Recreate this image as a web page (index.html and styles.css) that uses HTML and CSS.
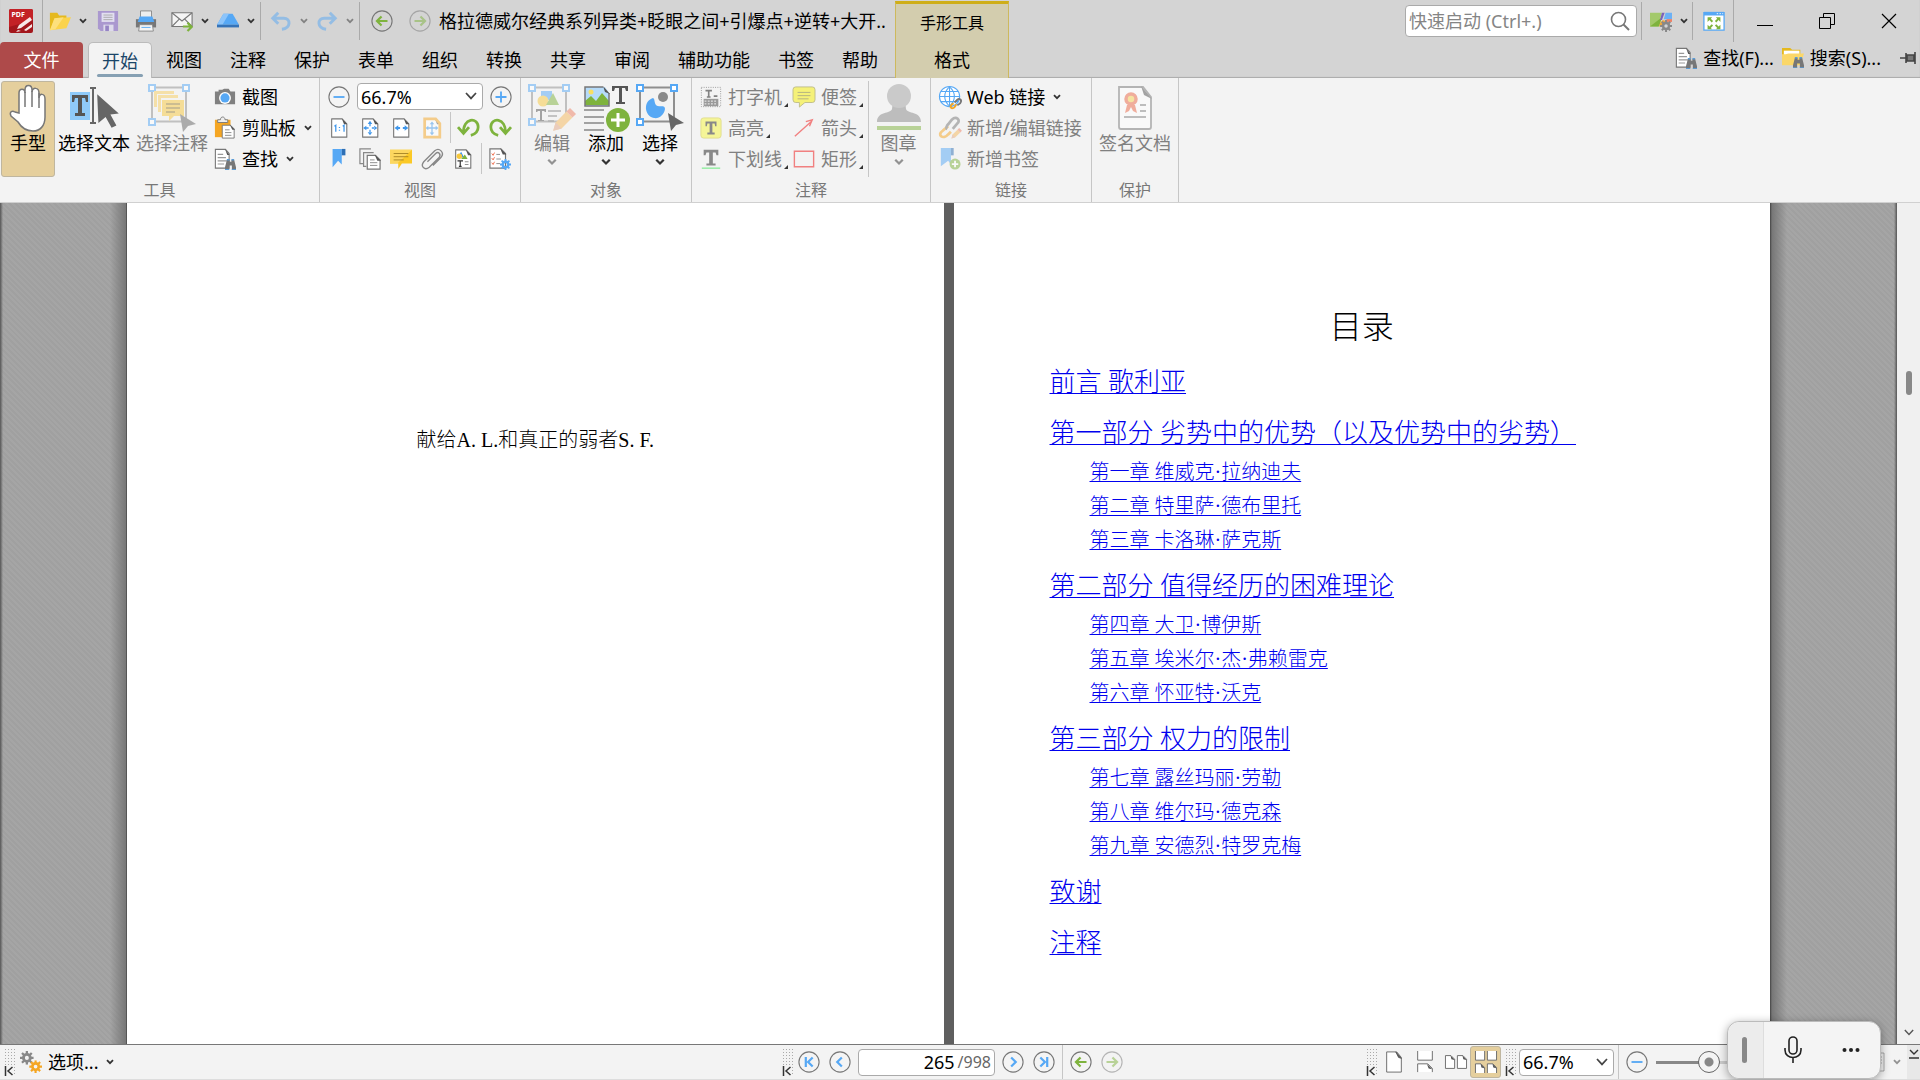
FILE: index.html
```html
<!DOCTYPE html>
<html lang="zh-CN">

<head>
    <meta charset="UTF-8">
    <meta name="viewport" content="width=device-width, initial-scale=1.0">
    <title>格拉德威尔经典系列</title>
    <link rel="stylesheet" href="styles.css">
</head>

<body>
    <!-- shared icons -->
    <svg class="sprite" aria-hidden="true">
        <symbol id="chev" viewBox="0 0 8 6"><path d="M1 1.2l3 3 3-3" fill="none" stroke="currentColor" stroke-width="1.8"/></symbol>
        <symbol id="chev-wide" viewBox="0 0 12 8"><path d="M1 1l5 5.4L11 1" fill="none" stroke="currentColor" stroke-width="1.7"/></symbol>
        <symbol id="sheet" viewBox="0 0 24 24">
            <path d="M4 2h11.500l5 5.500V22H4z" fill="#fff" stroke="#777" stroke-width="1.2" stroke-linejoin="round"/>
            <path d="M15 1.500l6 6.500h-3.500z" fill="#555"/>
        </symbol>
        <symbol id="binoc" viewBox="0 0 12 12">
            <path d="M2 1h3v2h2V1h3l2 8v3H7.500V7h-3v5H0V9z" fill="#777"/>
            <path d="M2 0h3v1.500H2zM7 0h3v1.500H7zM0 11h4.500v1H0zM7.500 11H12v1H7.500z" fill="#5b9bd5"/>
        </symbol>
        <symbol id="find" viewBox="0 0 24 24">
            <path d="M1.500 1.500h11l4 4.500v16h-15z" fill="#fff" stroke="#777" stroke-width="1.2"/>
            <path d="M12 1l5 6.500h-2.500z" fill="#555"/>
            <path d="M4 7h6M4 10.500h9M4 14h10M4 17.500h7" stroke="#999" stroke-width="1.2"/>
            <use href="#binoc" x="12" y="12" width="12" height="12"/>
        </symbol>
        <symbol id="circle" viewBox="0 0 24 24"><circle cx="12" cy="12" r="11" fill="#f4f4f4" stroke="#777" stroke-width="1.2"/></symbol>
        <symbol id="minus" viewBox="0 0 24 24"><use href="#circle"/><path d="M6 12h12" stroke="#56a8f5" stroke-width="2"/></symbol>
        <symbol id="plus" viewBox="0 0 24 24"><use href="#circle"/><path d="M6 12h12M12 6v12" stroke="#56a8f5" stroke-width="2"/></symbol>
        <symbol id="back" viewBox="0 0 24 24"><circle cx="12" cy="12" r="11" fill="none" stroke="#777" stroke-width="1.2"/><path d="M18 12H7M11.500 7L6.500 12l5 5" fill="none" stroke="#7eb33d" stroke-width="2.4"/></symbol>
        <symbol id="fwd" viewBox="0 0 24 24"><circle cx="12" cy="12" r="11" fill="none" stroke="#777" stroke-width="1.2"/><path d="M6 12h11M12.500 7l5 5-5 5" fill="none" stroke="#7eb33d" stroke-width="2.4"/></symbol>
        <symbol id="gear" viewBox="0 0 24 24">
            <circle cx="12" cy="12" r="6" fill="none" stroke="currentColor" stroke-width="5"/>
            <path d="M12 0v5M12 19v5M0 12h5M19 12h5M3.500 3.500l3.500 3.500M17 17l3.500 3.500M20.500 3.500L17 7M7 17l-3.500 3.500" stroke="currentColor" stroke-width="4"/>
        </symbol>
        <symbol id="pencil" viewBox="0 0 20 20"><path d="M1 19l2-7L12 3l5 5-9 9z" fill="#f5b95c"/><path d="M12 3l3-3 5 5-3 3z" fill="#ee8064"/><path d="M1 19l2-7 5 5z" fill="#e2a687"/></symbol>
        <symbol id="handles" viewBox="0 0 48 48">
            <path d="M4 4.500h34v34H4z" fill="none" stroke="#8f8f8f" stroke-width="2"/>
            <path d="M1 2h6v6H1zM35 2h6v6h-6zM1 36h6v6H1z" fill="#fff" stroke="#56a8f5" stroke-width="2"/>
        </symbol>
        <symbol id="cursor" viewBox="0 0 20 28"><path d="M1 0l18 16-7 1 5 9-4 2-5-9-6 5z" fill="#666"/></symbol>
        <symbol id="pointer" viewBox="0 0 16 18"><path d="M0 0l16 10-8 2-5 6z" fill="#666"/></symbol>
        <symbol id="ribbonmark" viewBox="0 0 24 24"><path d="M5 1h10v17l-4-4-6 7z" fill="#56a8f5"/><path d="M15 1h4v7h-4z" fill="#2d6fb5"/></symbol>
        <symbol id="first" viewBox="0 0 24 24"><use href="#circle"/><path d="M8.500 6.500v11M16 7l-5 5 5 5" fill="none" stroke="#56a8f5" stroke-width="2.4"/></symbol>
        <symbol id="prev" viewBox="0 0 24 24"><use href="#circle"/><path d="M14 7l-5 5 5 5" fill="none" stroke="#56a8f5" stroke-width="2.4"/></symbol>
        <symbol id="grip-end" viewBox="0 0 9 10"><path d="M1.500 0v10M8.500 1L4 5l4.500 4" fill="none" stroke="#333" stroke-width="1.5"/></symbol>
    </svg>

    <header class="header">
        <div class="header-left">
            <div class="quickbar">
                <button class="logo" aria-label="PDF"><svg viewBox="0 0 24 24">
                    <rect width="24" height="24" rx="2" fill="#a3161c"/>
                    <path d="M0 2a2 2 0 012-2h20a2 2 0 012 2v9L0 18z" fill="#c32126"/>
                    <text x="2.500" y="8" class="logo-text">PDF</text>
                    <path d="M8 20l2-4L21 8l2 3-11 8zM15 21l8-6v3l-6 4zM9 21l3 1-5 1z" fill="#fff" opacity=".9"/>
                </svg></button>
                <span class="sep tall"></span>
                <button class="qbtn split" aria-label="打开"><svg viewBox="0 0 24 24"><path d="M1 3h8l2 3h8v5L5 21H1z" fill="#e5b91f"/><path d="M6 9l18-1-5 12-18 2z" fill="#fbd34c"/><path d="M6 9l10-1-9 13-6 1z" fill="#fde07d"/></svg></button>
                <button class="drop" aria-label="打开选项"><svg><use href="#chev"/></svg></button>
                <button class="qbtn" aria-label="保存"><svg viewBox="0 0 24 24"><path d="M1 1h22v22H4l-3-3z" fill="#aa98cf"/><path d="M5 3h14v10H5z" fill="#e2dff0"/><path d="M7 5.500h10M7 8h10M7 10.500h10" stroke="#aaa"/><path d="M7 16h11v7H7z" fill="#dedbeb"/><path d="M9 17h4v6H9z" fill="#9684c4"/></svg></button>
                <button class="qbtn" aria-label="打印"><svg viewBox="0 0 24 24"><path d="M6 1h12v9H6z" fill="#eee" stroke="#888"/><path d="M1 10h22v9H1z" fill="#777"/><path d="M3 13l2-6h14l2 6z" fill="#56a8f5"/><path d="M5 16h14l1 7H4z" fill="#f4f4f4" stroke="#888"/><path d="M7 19h10" stroke="#56a8f5"/></svg></button>
                <button class="qbtn split" aria-label="电邮"><svg viewBox="0 0 24 24"><path d="M1 3h22v15H1z" fill="#f5f5f5" stroke="#777" stroke-width="1.200"/><path d="M1 3l11 9 11-9M1 18l8-8M23 18l-8-8" fill="none" stroke="#777" stroke-width="1.200"/><path d="M13 18h8M18 14l4.500 4.500L18 23" fill="none" stroke="#7eb33d" stroke-width="2.400"/></svg></button>
                <button class="drop" aria-label="电邮选项"><svg><use href="#chev"/></svg></button>
                <button class="qbtn split" aria-label="扫描"><svg viewBox="0 0 24 24"><path d="M7 4h10l7 12H0z" fill="#56a8f5"/><path d="M7 4h6L6 16H0z" fill="#8cc4fa"/><path d="M0 16h24v3H0z" fill="#3573b8"/></svg></button>
                <button class="drop" aria-label="扫描选项"><svg><use href="#chev"/></svg></button>
                <span class="sep"></span>
                <button class="qbtn split off" aria-label="撤销"><svg viewBox="0 0 24 24"><path d="M9 3L3 9l6 6M4 9h11c8 0 8 11-2 12" fill="none" stroke="#56a8f5" stroke-width="3.200"/></svg></button>
                <button class="drop off" aria-label="撤销选项"><svg><use href="#chev"/></svg></button>
                <button class="qbtn split off" aria-label="重做"><svg viewBox="0 0 24 24"><path d="M15 3l6 6-6 6M20 9H9c-8 0-8 11 2 12" fill="none" stroke="#56a8f5" stroke-width="3.200"/></svg></button>
                <button class="drop off" aria-label="重做选项"><svg><use href="#chev"/></svg></button>
                <span class="sep"></span>
                <button class="qbtn" aria-label="后退"><svg><use href="#back"/></svg></button>
                <button class="qbtn off" aria-label="前进"><svg><use href="#fwd"/></svg></button>
                <span class="doc-title">格拉德威尔经典系列异类+眨眼之间+引爆点+逆转+大开..</span>
            </div>
            <nav class="tabs">
                <button class="tab file">文件</button>
                <button class="tab active">开始</button>
                <button class="tab">视图</button>
                <button class="tab">注释</button>
                <button class="tab">保护</button>
                <button class="tab">表单</button>
                <button class="tab">组织</button>
                <button class="tab">转换</button>
                <button class="tab">共享</button>
                <button class="tab">审阅</button>
                <button class="tab">辅助功能</button>
                <button class="tab">书签</button>
                <button class="tab">帮助</button>
            </nav>
        </div>
        <div class="context-tab">
            <span class="context-name">手形工具</span>
            <button class="tab">格式</button>
        </div>
        <div class="header-right">
            <div class="window-row">
                <label class="search">
                    <input type="text" placeholder="快速启动 (Ctrl+.)" aria-label="快速启动">
                    <svg viewBox="0 0 20 20"><circle cx="8.500" cy="8.500" r="7" fill="none" stroke="#777" stroke-width="1.600"/><path d="M13.500 13.500l5.500 5.500" stroke="#777" stroke-width="2"/></svg>
                </label>
                <span class="sep"></span>
                <button class="qbtn split" aria-label="界面选项"><svg viewBox="0 0 24 24"><path d="M0 3h13l-4 15H0z" fill="#a3c96b"/><path d="M0 18L13 8l-3 10z" fill="#7eb33d"/><path d="M13 3h3l-3 8h-2z" fill="#7c62bb"/><path d="M17 3h7v7h-9z" fill="#6cb1f5"/><path d="M11 14l3-3 3 1-4 6h-3z" fill="#f2a83b"/><path d="M18 10h6v3h-6z" fill="#ee8064"/><use href="#gear" x="11" y="11" width="13" height="13" color="#888"/></svg></button>
                <button class="drop" aria-label="更多界面选项"><svg><use href="#chev"/></svg></button>
                <span class="sep"></span>
                <button class="qbtn wide" aria-label="全屏"><svg viewBox="0 0 24 24"><path d="M1 3h22v19H1z" fill="#fff" stroke="#56a8f5" stroke-width="1.400"/><path d="M1 2h22v4H1z" fill="#56a8f5"/><path d="M5 8h5l-1.500 1.500 2.500 2.500-1.500 1.500L7 11l-2 2zM19 8h-5l1.500 1.500L13 12l1.500 1.500L17 11l2 2zM5 21h5l-1.500-1.500L11 17l-1.500-1.500L7 18l-2-2zM19 21h-5l1.500-1.500L13 17l1.500-1.500L17 18l2-2z" fill="#7eb33d"/><path d="M15 4h1.500M18 4h1.500M21 4h1" stroke="#fff"/></svg></button>
                <span class="sep tall"></span>
                <button class="win" aria-label="最小化"><svg viewBox="0 0 16 16"><path d="M0 12.500h16" stroke="#000"/></svg></button>
                <button class="win" aria-label="还原"><svg viewBox="0 0 16 16"><path d="M.5 4.500h11v11H.5zM4.500 4V.5h11v11H12" fill="none" stroke="#000"/></svg></button>
                <button class="win" aria-label="关闭"><svg viewBox="0 0 16 16"><path d="M1 1l14 14M15 1L1 15" stroke="#000" stroke-width="1.200"/></svg></button>
            </div>
            <div class="find-row">
                <button class="small"><svg><use href="#find"/></svg>查找(F)...</button>
                <button class="small"><svg viewBox="0 0 24 24"><path d="M0 1h9l2 2h9v6H0z" fill="#e5b91f"/><path d="M2 4h17v8H2z" fill="#fff"/><path d="M0 20V8h4l3-1h17l-4 13z" fill="#fbd768"/><use href="#binoc" x="12" y="11" width="12" height="12"/></svg>搜索(S)...</button>
                <button class="pin" aria-label="固定"><svg viewBox="0 0 16 12"><path d="M0 6h6M6 1v10M15 0v12M7 3h7v6H7z" stroke="#444" stroke-width="1.600" fill="#777"/></svg></button>
            </div>
        </div>
    </header>

    <div class="ribbon">
        <section class="group">
            <div class="group-body">
                <button class="big selected"><svg viewBox="0 0 48 48"><path d="M15 30V10c0-5 6-5 6 0V7c0-6 7-6 7 0v2c0-5 7-5 7 1v5c0-5 6-5 6 1v18c0 9-5 14-12 14-8 0-12-4-15-9L7 33c-2-4 1-6 4-4z" fill="#fff" stroke="#777" stroke-width="1.500"/><path d="M21 9v15M28 8v16M35 10v15" stroke="#777" stroke-width="1.500"/></svg>手型</button>
                <button class="big wide"><svg viewBox="0 0 48 48"><path d="M0 9h20v28H0z" fill="#8fcaf9"/><path d="M2 12h16v7h-2l-1-4h-3v15h3v3H5v-3h3V15H5l-1 4H2z" fill="#555"/><path d="M20 5h6M20 40h6M23 5v35" stroke="#666" stroke-width="2"/><use href="#cursor" x="26" y="11" width="24" height="34"/></svg>选择文本</button>
                <button class="big wide off"><svg viewBox="0 0 48 48"><use href="#handles"/><path d="M6 8h20v3H9v13H6z" fill="#f8cf62"/><path d="M10 12h20v3H13v14h-3z" fill="#f8cf62"/><path d="M14 17h22v16H26l-5 5v-5h-7z" fill="#f8c93d"/><path d="M18 21h14M18 25h14M18 29h9" stroke="#8a742e" stroke-width="1.300"/><use href="#pointer" x="32" y="31" width="16" height="18"/></svg>选择注释</button>
                <div class="stack first">
                    <button class="small"><svg viewBox="0 0 24 24"><path d="M1 6h4V4h4l2-1h5l2 3h5v14H1z" fill="#808080"/><circle cx="12" cy="13" r="6.500" fill="#fff"/><circle cx="12" cy="13" r="5" fill="#56a8f5"/></svg>截图</button>
                    <button class="small"><svg viewBox="0 0 24 24"><path d="M1 3h17v19H1z" fill="#f5a623"/><path d="M4 6V3h3c0-4 5-4 5 0h3v3z" fill="#eee" stroke="#777"/><path d="M9 9h9l4 4v10H9z" fill="#fff" stroke="#777"/><path d="M12 14h5M12 17h7M12 20h7" stroke="#888"/><path d="M17 8l6 6h-3z" fill="#555"/></svg>剪贴板 <svg class="chev"><use href="#chev"/></svg></button>
                    <button class="small"><svg><use href="#find"/></svg>查找 <svg class="chev"><use href="#chev"/></svg></button>
                </div>
            </div>
            <h2>工具</h2>
        </section>

        <section class="group">
            <div class="group-body view">
                <div class="tools">
                    <button class="icon" aria-label="缩小"><svg><use href="#minus"/></svg></button>
                    <span class="select-box"><select aria-label="缩放"><option>66.7%</option></select><svg><use href="#chev-wide"/></svg></span>
                    <button class="icon" aria-label="放大"><svg><use href="#plus"/></svg></button>
                </div>
                <div class="tools">
                    <button class="icon" aria-label="实际大小"><svg viewBox="0 0 24 24"><use href="#sheet"/><path d="M7 10l1.500-1v7M16 10l1.500-1v7M12.500 11v1M12.500 14v1" fill="none" stroke="#3f97ec" stroke-width="1.400"/></svg></button>
                    <button class="icon" aria-label="适合页面"><svg viewBox="0 0 24 24"><use href="#sheet"/><path d="M12 4l2.500 3.500h-5zM12 20l2.500-3.500h-5zM4.500 12L8 9.500v5zM20 12l-3.500-2.500v5zM11.300 7h1.400v3h-1.400zM11.300 14h1.400v3h-1.400zM8 11.300h2.500v1.400H8zM14 11.300h3v1.400h-3z" fill="#3f97ec"/></svg></button>
                    <button class="icon" aria-label="适合宽度"><svg viewBox="0 0 24 24"><use href="#sheet"/><path d="M5 12l4-3v2h2v2H9v2zM20 12l-4-3v2h-2v2h2v2z" fill="#3f97ec"/></svg></button>
                    <button class="icon off" aria-label="适合可见"><svg viewBox="0 0 24 24"><use href="#sheet"/><path d="M4 2h12l4.500 5v15H4z" fill="none" stroke="#f5a623" stroke-width="3"/><path d="M12 5l2.500 3h-5zM12 20l2.500-3h-5zM5 12l3-2.500v5zM19 12l-3-2.500v5zM11.300 7h1.400v10h-1.400zM8 11.300h8v1.400H8z" fill="#3f97ec"/></svg></button>
                    <span class="line"></span>
                    <button class="icon" aria-label="向左旋转"><svg viewBox="0 0 24 24"><path d="M6 18C5 0 22 0 22 11c0 5-4 8-8 9M0 11l6 7 6-7" fill="none" stroke="#7eb33d" stroke-width="3"/></svg></button>
                    <button class="icon" aria-label="向右旋转"><svg viewBox="0 0 24 24"><path d="M18 18C19 0 2 0 2 11c0 5 4 8 8 9M24 11l-6 7-6-7" fill="none" stroke="#7eb33d" stroke-width="3"/></svg></button>
                </div>
                <div class="tools">
                    <button class="icon" aria-label="书签"><svg><use href="#ribbonmark"/></svg></button>
                    <button class="icon" aria-label="缩略图"><svg viewBox="0 0 24 24"><path d="M5 17H1V1h12M8 20H5V5h11" fill="none" stroke="#888" stroke-width="1.300"/><path d="M9 8h9l5 5v10H9z" fill="#fff" stroke="#777" stroke-width="1.300"/><path d="M12 13h5M12 16h8M12 19h8" stroke="#888"/><path d="M17 7l7 7h-4z" fill="#555"/></svg></button>
                    <button class="icon" aria-label="注释"><svg viewBox="0 0 24 24"><path d="M0 2h24v15H13l-4 6v-6H0z" fill="#fbc926"/><path d="M0 2h24L8 17H0z" fill="#fcd75f"/><path d="M4 6h16M4 9.500h16M4 13h11" stroke="#a58324"/></svg></button>
                    <button class="icon" aria-label="附件"><svg viewBox="0 0 24 24"><path d="M7 15l9-9c3-3 6 1 4 4L9 21c-5 4-10-1-6-6L15 3c5-4 11 2 7 7l-9 9" fill="none" stroke="#888" stroke-width="1.500"/></svg></button>
                    <button class="icon" aria-label="内容"><svg viewBox="0 0 24 24"><use href="#sheet"/><path d="M10 4l3 6H6z" fill="#3f97ec"/><circle cx="8" cy="9" r="3" fill="#f8c93d"/><path d="M10 12l4-5 3 5z" fill="#7eb33d"/><path d="M6 14h6M9 14v6M7.500 20h3" stroke="#333" stroke-width="1.300"/><path d="M14 15h4M14 18h4" stroke="#888"/></svg></button>
                    <span class="line"></span>
                    <button class="icon" aria-label="设置"><svg viewBox="0 0 24 24"><path d="M1 1h12l5 5v16H1z" fill="#fff" stroke="#777" stroke-width="1.300"/><path d="M12 0l7 7h-4z" fill="#555"/><path d="M8 7h4M8 12h5M8 17h4" stroke="#888"/><path d="M3 6l1.500 2L6 5M3 11l1.500 2L6 10M3 16l1.500 2L6 15" fill="none" stroke="#ee6a48"/><use href="#gear" x="12" y="12" width="12" height="12" color="#56a8f5"/></svg></button>
                </div>
            </div>
            <h2>视图</h2>
        </section>

        <section class="group">
            <div class="group-body objects">
                <button class="big off"><svg viewBox="0 0 48 48"><use href="#handles"/><path d="M13 8h11v9H13z" fill="#56a8f5"/><circle cx="15" cy="18" r="5.500" fill="#f8c93d"/><path d="M18 22l7-12 6 12z" fill="#7eb33d"/><path d="M8 26h10v3h-1l-1-1h-2v9h2v1h-6v-1h2v-9h-2l-1 1H8z" fill="#555"/><path d="M20 28h13M20 33h9M20 38h6" stroke="#777" stroke-width="1.500"/><use href="#pencil" x="24" y="25" width="24" height="24"/></svg>编辑<svg class="chev"><use href="#chev"/></svg></button>
                <button class="big"><svg viewBox="0 0 48 48"><path d="M3 4h20l4 6v13H3z" fill="#b5dbfa"/><circle cx="9" cy="9" r="2.500" fill="#f8df65"/><path d="M3 22v-4l6-5 5 5 6-8 7 8v4z" fill="#7eb33d"/><path d="M21 4H3v19h24V10" fill="none" stroke="#777" stroke-width="1.500"/><path d="M21 3l7 8-5-2z" fill="#555"/><path d="M30 3h16v5h-2l-1-3h-3v14h3v2h-9v-2h3V5h-4l-1 3h-2z" fill="#555"/><path d="M2 27h20M2 34h20M2 40h20M2 47h20" stroke="#888" stroke-width="1.500"/><circle cx="36" cy="37" r="12" fill="#7eb33d"/><path d="M36 30v14M29 37h14" stroke="#fff" stroke-width="3"/></svg>添加<svg class="chev"><use href="#chev"/></svg></button>
                <button class="big"><svg viewBox="0 0 48 48"><use href="#handles"/><circle cx="27" cy="14" r="5" fill="#8a8a8a"/><path d="M17 15c2 1 1 4 3 7 3 3 9-1 9 4-1 6-6 10-11 9-10-2-11-17-1-20z" fill="#56a8f5"/><use href="#pointer" x="32" y="30" width="16" height="18"/></svg>选择<svg class="chev"><use href="#chev"/></svg></button>
            </div>
            <h2>对象</h2>
        </section>

        <section class="group">
            <div class="group-body comments">
                <div class="stack">
                    <button class="small corner off"><svg viewBox="0 0 24 24"><path d="M1.500 1.500h21v21h-21z" fill="none" stroke="#333" stroke-dasharray="1 1.500"/><path d="M6 5h7M9.500 5v7M7.500 12h4M15 11h4" stroke="#111" stroke-width="1.800"/><path d="M4 14h16v8H4z" fill="#444"/><path d="M5 16.500h14M5 19.500h14" stroke="#fff" stroke-dasharray="2 1.500"/></svg>打字机</button>
                    <button class="small corner off"><svg viewBox="0 0 24 24"><rect x="1" y="1" width="22" height="22" rx="3" fill="#f8f83e" stroke="#cfc828"/><path d="M6 5h12v5h-1.500L16 7h-2.500v10H16v2H8v-2h2.500V7H8l-.5 3H6z" fill="#222"/></svg>高亮</button>
                    <button class="small corner off"><svg viewBox="0 0 24 24"><path d="M4 2h16v6h-2l-1-3h-3v12h3v2H7v-2h3V5H7L6 8H4z" fill="#222"/><path d="M2 22h20" stroke="#2be64b" stroke-width="1.500"/></svg>下划线</button>
                </div>
                <div class="stack second">
                    <button class="small corner off"><svg viewBox="0 0 24 24"><path d="M3 1h18q3 0 3 3v11q0 3-3 3h-8l-6 5v-5H3q-3 0-3-3V4q0-3 3-3z" fill="#f8f000" stroke="#8a8522"/><path d="M5 7h14M5 10.500h14M5 14h12" stroke="#6d6b14"/></svg>便签</button>
                    <button class="small corner off"><svg viewBox="0 0 24 24"><path d="M2 21L20 5M14 5l7-2-3 7" fill="none" stroke="#f01010" stroke-width="1.500"/></svg>箭头</button>
                    <button class="small corner off"><svg viewBox="0 0 24 24"><path d="M1.500 3.500h21v17h-21z" fill="none" stroke="#f01010" stroke-width="1.500"/></svg>矩形</button>
                </div>
                <span class="line"></span>
                <button class="big off"><svg viewBox="0 0 48 48"><path d="M18 18h12l1 8c1 5 15 2 15 13H2c0-11 14-8 15-13z" fill="#888"/><circle cx="24" cy="13" r="12" fill="#a3a3a3"/><path d="M2 43h44v4H2z" fill="#7eb33d"/></svg>图章<svg class="chev"><use href="#chev"/></svg></button>
            </div>
            <h2>注释</h2>
        </section>

        <section class="group">
            <div class="group-body links">
                <div class="stack">
                    <button class="small"><svg viewBox="0 0 24 24"><circle cx="11.500" cy="11.500" r="11" fill="#fff" stroke="#56a8f5" stroke-width="1.200"/><path d="M11.500 0v23M0 11.500h23M2 6h19M2 17h19M11.500 1c-7 6-7 15 0 21M11.500 1c7 6 7 15 0 21" fill="none" stroke="#56a8f5" stroke-width="1.200"/><path d="M16 19l-2 1c-3 3 0 6 3 3l2-3" fill="none" stroke="#f5a623" stroke-width="2"/><path d="M17 18l3-3c2-2 6 0 3 4l-3 2" fill="none" stroke="#777" stroke-width="2"/></svg>Web 链接 <svg class="chev"><use href="#chev"/></svg></button>
                    <button class="small off"><svg viewBox="0 0 24 24"><path d="M10 10l-6 5c-7 5 1 10 6 4l3-3" fill="none" stroke="#f5a623" stroke-width="3"/><path d="M9 13c-2-1 0-4 1-5l4-5c5-5 10 1 6 4l-5 6" fill="none" stroke="#777" stroke-width="3"/><use href="#pencil" x="13" y="12" width="12" height="12"/></svg>新增/编辑链接</button>
                    <button class="small off"><svg viewBox="0 0 24 24"><path d="M2 0h11v18l-3-4-8 6z" fill="#56a8f5"/><path d="M13 0h3v8h-3z" fill="#2d6fb5"/><circle cx="17.500" cy="17.500" r="6" fill="#7eb33d"/><path d="M17.500 14v7M14 17.500h7" stroke="#fff" stroke-width="2"/></svg>新增书签</button>
                </div>
            </div>
            <h2>链接</h2>
        </section>

        <section class="group">
            <div class="group-body protect">
                <button class="big wide off"><svg viewBox="0 0 48 48"><path d="M8 4h24l8 10v30q0 2-2 2H10q-2 0-2-2z" fill="#fff" stroke="#777" stroke-width="1.800"/><path d="M30 3l11 13-8-4z" fill="#555"/><circle cx="20" cy="16" r="5" fill="#f7d451" stroke="#ee6a48" stroke-width="3.500"/><path d="M16 22l-2 8 4-2 2-4 2 4 4 2-2-8z" fill="#ee6a48"/><path d="M29 22h6M29 28h6M13 34h22" stroke="#888" stroke-width="2"/></svg>签名文档</button>
            </div>
            <h2>保护</h2>
        </section>
    </div>

    <main class="viewer">
        <div class="canvas">
            <article class="page dedication">
                <p>献给A. L.和真正的弱者S. F.</p>
            </article>
            <article class="page toc">
                <h1>目录</h1>
                <ul>
                    <li class="part"><a href="#">前言 歌利亚</a></li>
                    <li class="part"><a href="#">第一部分 劣势中的优势（以及优势中的劣势）</a></li>
                    <li class="chapter"><a href="#">第一章 维威克·拉纳迪夫</a></li>
                    <li class="chapter"><a href="#">第二章 特里萨·德布里托</a></li>
                    <li class="chapter"><a href="#">第三章 卡洛琳·萨克斯</a></li>
                    <li class="part"><a href="#">第二部分 值得经历的困难理论</a></li>
                    <li class="chapter"><a href="#">第四章 大卫·博伊斯</a></li>
                    <li class="chapter"><a href="#">第五章 埃米尔·杰·弗赖雷克</a></li>
                    <li class="chapter"><a href="#">第六章 怀亚特·沃克</a></li>
                    <li class="part"><a href="#">第三部分 权力的限制</a></li>
                    <li class="chapter"><a href="#">第七章 露丝玛丽·劳勒</a></li>
                    <li class="chapter"><a href="#">第八章 维尔玛·德克森</a></li>
                    <li class="chapter"><a href="#">第九章 安德烈·特罗克梅</a></li>
                    <li class="part"><a href="#">致谢</a></li>
                    <li class="part"><a href="#">注释</a></li>
                </ul>
            </article>
        </div>
        <div class="scrollbar">
            <span class="thumb"></span>
            <svg class="scroll-down"><use href="#chev-wide"/></svg>
        </div>
    </main>

    <footer class="statusbar">
        <div class="status-group">
            <span class="grip"><svg><use href="#grip-end"/></svg></span>
            <button class="small options"><svg viewBox="0 0 24 24"><use href="#gear" x="0" y="0" width="15" height="15" color="#888"/><use href="#gear" x="10" y="10" width="14" height="14" color="#f5a623"/></svg>选项... <svg class="chev"><use href="#chev"/></svg></button>
        </div>
        <div class="status-group pager">
            <span class="grip"><svg><use href="#grip-end"/></svg></span>
            <button class="icon" aria-label="首页"><svg><use href="#first"/></svg></button>
            <button class="icon" aria-label="上一页"><svg><use href="#prev"/></svg></button>
            <label class="page-box"><input type="text" value="265" aria-label="页码"><span>/998</span></label>
            <button class="icon flip" aria-label="下一页"><svg><use href="#prev"/></svg></button>
            <button class="icon flip" aria-label="末页"><svg><use href="#first"/></svg></button>
            <span class="line"></span>
            <button class="icon" aria-label="后退"><svg><use href="#back"/></svg></button>
            <button class="icon off" aria-label="前进"><svg><use href="#fwd"/></svg></button>
        </div>
        <div class="status-group layout">
            <span class="grip"><svg><use href="#grip-end"/></svg></span>
            <button class="mode" aria-label="单页"><svg viewBox="0 0 24 24"><path d="M4 1h11l5 6v16H4z" fill="#fff" stroke="#666"/><path d="M14 1l6 7-3-1z" fill="#555" stroke="#555"/></svg></button>
            <button class="mode" aria-label="连续"><svg viewBox="0 0 24 24"><path d="M4 0v10h16V0M4 23v-9h11l5 5v4" fill="#fff" stroke="#666"/><path d="M14 14l6 6-4-1z" fill="#555"/></svg></button>
            <button class="mode" aria-label="双页"><svg viewBox="0 0 24 24"><path d="M.5 5h6l4 4v10H.5zM13.500 5h6l4 4v10h-10z" fill="#fff" stroke="#666"/><path d="M6 5l5 5-4-1zM19 5l5 5-4-1z" fill="#555"/></svg></button>
            <button class="mode selected" aria-label="双页连续"><svg viewBox="0 0 24 24"><path d="M.5 0v10h10V0M13.500 0v10h10V0M.5 24V14h6l4 4v6M13.500 24V14h6l4 4v6" fill="#fff" stroke="#666"/><path d="M6 14l5 5-4-1zM19 14l5 5-4-1z" fill="#555"/></svg></button>
            <span class="grip"><svg><use href="#grip-end"/></svg></span>
            <span class="select-box"><select aria-label="缩放比例"><option>66.7%</option></select><svg><use href="#chev-wide"/></svg></span>
            <span class="line"></span>
            <button class="icon" aria-label="缩小"><svg><use href="#minus"/></svg></button>
            <input type="range" min="0" max="100" value="50" aria-label="缩放滑块">
            <span class="status-end">
                <button class="end-btn off" aria-label="面板"><svg viewBox="0 0 16 20"><path d="M1 1h14v18H1M9 5h4M9 8h4M9 11h4" fill="none" stroke="#666"/></svg><svg class="chev"><use href="#chev"/></svg></button>
                <button class="overflow" aria-label="更多"><svg viewBox="0 0 10 10"><path d="M1 1l4 4 4-4M0 9h10" fill="none" stroke="#333" stroke-width="1.400"/></svg></button>
            </span>
        </div>
    </footer>

    <!-- floating voice typing widget -->
    <div class="voice">
        <span class="voice-handle"></span>
        <button aria-label="语音输入"><svg viewBox="0 0 18 28"><rect x="5" y="1" width="8" height="17" rx="4" fill="none" stroke="#222" stroke-width="1.600"/><path d="M1 12v2c0 10 16 10 16 0v-2M9 22v5" fill="none" stroke="#222" stroke-width="1.600"/></svg></button>
        <button aria-label="更多"><svg viewBox="0 0 18 28"><circle cx="2.500" cy="14" r="2" fill="#222"/><circle cx="9" cy="14" r="2" fill="#222"/><circle cx="15.500" cy="14" r="2" fill="#222"/></svg></button>
    </div>
</body>

</html>
```
FILE: styles.css
```css
* {
    box-sizing: border-box;
    margin: 0;
    padding: 0;
}

body {
    height: 100vh;
    display: flex;
    flex-direction: column;
    overflow: hidden;
    background: #f3f3f3;
    color: #000;
    font-family: 'Noto Sans', 'Noto Sans CJK SC', sans-serif;
    font-size: 18px;
    line-height: 24px;
}

button,
input,
select {
    font: inherit;
    color: inherit;
    border: none;
    background: none;
}

button {
    display: flex;
    align-items: center;
    justify-content: center;
    white-space: nowrap;
}

svg {
    width: 22px;
    height: 22px;
    flex: none;
    overflow: visible;
}

.sprite {
    position: absolute;
    width: 0;
    height: 0;
}

.off {
    color: #808080;
}

.off svg {
    opacity: 0.5;
}

.chev,
.drop svg {
    width: 8px;
    height: 6px;
    color: #333;
}

/* title bar and tabs */
.header {
    display: grid;
    grid-template-columns: 895px 114px 1fr;
    height: 78px;
    flex: none;
    background: #d4d4d4;
    box-shadow: inset 0 -1px 1px #aaa;
}

.quickbar,
.window-row {
    display: flex;
    align-items: center;
    height: 42px;
}

.logo {
    width: 42px;
}

.logo svg {
    width: 24px;
    height: 24px;
}

.logo-text {
    font-size: 7px;
    font-weight: bold;
    fill: #fff;
}

.sep {
    width: 1px;
    height: 38px;
    margin: 0 2px;
    background: #aaa;
}

.quickbar .sep {
    margin: 0 3px;
}

.header .sep.tall {
    height: 42px;
    margin: 0;
}

.qbtn {
    width: 38px;
    height: 38px;
}

.qbtn.split {
    width: 34px;
}

.drop {
    width: 12px;
    height: 38px;
}

.doc-title {
    white-space: nowrap;
}

.tabs {
    display: flex;
    height: 36px;
}

.tab {
    height: 36px;
    padding: 0 14px;
}

.tab.file {
    width: 83px;
    margin-right: 5px;
    border-radius: 4px 4px 0 0;
    background: #ae4a4a;
    color: #fff;
}

.tab.active {
    position: relative;
    border: solid #bbb;
    border-width: 1px 1px 0;
    border-radius: 5px 5px 0 0;
    padding: 0 13px;
    background: #f3f3f3;
    color: #1a4568;
}

.tab.active::after {
    content: "";
    position: absolute;
    left: 8px;
    right: 8px;
    bottom: 1px;
    height: 3px;
    border-radius: 2px;
    background: #86a0b3;
}

.context-tab {
    display: flex;
    flex-direction: column;
    align-items: center;
    justify-content: space-between;
    margin-top: 1px;
    border: solid #cdb95d;
    border-width: 3px 1px 0;
    border-top-color: #cfae18;
    background: #d3cdae;
}

.context-name {
    padding-top: 7px;
    font-size: 16px;
}

.window-row,
.find-row {
    justify-content: flex-end;
}

.search {
    display: flex;
    align-items: center;
    width: 232px;
    height: 32px;
    margin-right: 2px;
    padding: 0 6px 0 3px;
    border: 1px solid #aaa;
    border-radius: 4px;
    background: #fff;
}

.search input {
    flex: 1;
    min-width: 0;
    outline: none;
}

.search input::placeholder {
    color: #858585;
}

.search svg {
    width: 20px;
    height: 20px;
}

.win {
    width: 62px;
    height: 42px;
}

.win svg {
    width: 16px;
    height: 16px;
}

.find-row {
    display: flex;
    align-items: center;
    gap: 8px;
    height: 32px;
}

.find-row .pin {
    width: 31px;
    justify-content: flex-end;
    padding-right: 4px;
}

.pin svg {
    width: 16px;
    height: 12px;
}

/* ribbon */
.ribbon {
    display: grid;
    grid-template-columns: 320px 201px 171px 239px 161px 87px;
    flex: none;
    height: 125px;
    border-bottom: 1px solid #d0d0d0;
}

.group {
    border-right: 1px solid #c6c6c6;
}

.group h2 {
    font-size: 16px;
    font-weight: normal;
    text-align: center;
    color: #777;
}

.group-body {
    display: flex;
    height: 100px;
    padding: 3px 1px 1px;
}

.big {
    flex-direction: column;
    justify-content: flex-start;
    width: 54px;
    height: 96px;
    padding-top: 2px;
}

.big.wide {
    width: 78px;
}

.big svg {
    width: 48px;
    height: 48px;
}

.big .chev {
    width: 10px;
    height: 8px;
    margin-top: 3px;
}

.selected {
    border: 1px solid #bfb69f;
    border-radius: 3px;
    background: #e5cf9d;
}

.big.selected {
    padding-top: 1px;
}

.stack {
    display: flex;
    flex-direction: column;
}

.stack.first {
    padding-left: 3px;
}

.small {
    justify-content: flex-start;
    gap: 6px;
    height: 31px;
}

.small .chev {
    margin-left: 2px;
}

.group-body.view {
    flex-direction: column;
    padding-left: 8px;
}

.tools {
    display: flex;
    align-items: center;
    gap: 9px;
    height: 31px;
}

.icon {
    width: 22px;
    height: 22px;
}

.line {
    align-self: stretch;
    width: 1px;
    background: #c6c6c6;
}

.tools .line {
    margin: 0 -2px;
}

.select-box {
    position: relative;
    width: 126px;
    height: 27px;
}

.tools .select-box {
    margin: 0 -2px;
}

.select-box select {
    width: 100%;
    height: 100%;
    padding-left: 3px;
    border: 1px solid #aaa;
    border-radius: 4px;
    background: #fff;
    appearance: none;
}

.select-box svg {
    position: absolute;
    right: 6px;
    top: 9px;
    width: 12px;
    height: 8px;
    color: #444;
    pointer-events: none;
}

.group-body.objects {
    padding-left: 4px;
}

.group-body.comments {
    padding-left: 8px;
}

.group-body.comments .stack {
    width: 93px;
}

.group-body.comments .second {
    width: 75px;
}

.comments .big {
    width: 59px;
}

.corner::after {
    content: "";
    align-self: flex-end;
    margin: 0 0 5px -4px;
    border-top: 4px solid transparent;
    border-right: 4px solid #333;
}

.group-body.links {
    padding-left: 8px;
}

.group-body.protect {
    padding-left: 4px;
}

/* document */
.viewer {
    flex: 1;
    display: flex;
    min-height: 0;
    border-bottom: 1px solid #777;
}

.canvas {
    flex: 1;
    display: grid;
    grid-template-columns: 1fr 1fr;
    gap: 10px;
    padding: 0 127px;
    background:
        linear-gradient(90deg, #555 0, transparent 3px, transparent 110px, #777 126px, #333 127px, #5f5f5f 127px, #5f5f5f calc(100% - 127px), #444 calc(100% - 127px), #777 calc(100% - 125px), transparent calc(100% - 110px), transparent calc(100% - 3px), #555 100%),
        repeating-linear-gradient(45deg, #a0a0a0 0 2px, #a5a5a5 2px 4px);
}

.page {
    background: #fff;
    font-family: 'Liberation Serif', 'Noto Sans CJK SC', serif;
    font-weight: 300;
}

.dedication {
    padding-top: 223px;
    text-align: center;
    font-size: 20px;
    line-height: 28px;
}

.toc {
    padding: 102px 96px 0;
}

.toc h1 {
    text-align: center;
    font-size: 32px;
    font-weight: 300;
    line-height: 44px;
}

.toc ul {
    padding-top: 4px;
    list-style: none;
}

.toc a {
    color: #0000ee;
    text-decoration-thickness: 1px;
    text-underline-offset: 2px;
}

.part {
    margin: 15px 0 6px;
    font-size: 26px;
    line-height: 30px;
}

.part + .part {
    margin-top: 21px;
}

.chapter {
    padding-left: 40px;
    font-size: 20px;
    line-height: 34px;
}

.scrollbar {
    display: flex;
    flex-direction: column;
    align-items: center;
    justify-content: space-between;
    width: 23px;
    padding: 168px 0 8px;
    background: #f0f0f0;
}

.thumb {
    width: 6px;
    height: 24px;
    border-radius: 3px;
    background: #888;
}

.scroll-down {
    width: 10px;
    height: 7px;
    color: #555;
}

/* status bar */
.statusbar {
    display: grid;
    grid-template-columns: 778px 1fr 558px;
    flex: none;
    height: 35px;
    border-bottom: 1px solid #ddd;
}

.status-group {
    display: flex;
    align-items: center;
    padding-left: 2px;
}

.grip {
    display: flex;
    align-items: flex-end;
    width: 13px;
    height: 28px;
    padding-left: 2px;
    background: radial-gradient(circle, #aaa 0 1px, transparent 1px) 0 0 / 3px 3px content-box;
}

.grip svg {
    width: 9px;
    height: 10px;
    background: #f3f3f3;
}

.options {
    padding-left: 5px;
}

.pager {
    gap: 9px;
}

.pager .grip {
    margin-right: -4px;
}

.page-box {
    display: flex;
    align-items: center;
    width: 137px;
    height: 27px;
    margin: 0 -2px;
    padding-right: 3px;
    border: 1px solid #aaa;
    border-radius: 4px;
    background: #fff;
}

.page-box input {
    flex: 1;
    min-width: 0;
    text-align: right;
}

.page-box span {
    padding-left: 3px;
    font-size: 16px;
    color: #666;
}

.flip svg {
    transform: scaleX(-1);
}

.pager .line {
    margin: 0 -2px;
}

.layout .line {
    margin: 0 7px 0 4px;
}

.layout .select-box {
    width: 95px;
    margin-left: 3px;
}

.mode {
    width: 29px;
    height: 32px;
    margin-left: 2px;
}

.mode.selected {
    width: 31px;
    margin: 0 2px 0 0;
}

input[type="range"] {
    width: 106px;
    height: 24px;
    margin-left: 8px;
    appearance: none;
    background: linear-gradient(90deg, #888 50%, #ccc 50%) center / 100% 3px no-repeat;
}

input[type="range"]::-webkit-slider-thumb {
    appearance: none;
    width: 22px;
    height: 22px;
    border: 1px solid #666;
    border-radius: 50%;
    background: radial-gradient(circle, #888 0 4px, #f4f4f4 5px);
}

.status-end {
    display: flex;
    align-items: center;
    gap: 6px;
    margin-left: auto;
}

.end-btn {
    gap: 8px;
}

.end-btn svg:first-child {
    width: 16px;
    height: 20px;
}

.overflow {
    align-items: flex-start;
    width: 13px;
    height: 34px;
    padding-top: 4px;
    background: #e8e8e8;
}

.overflow svg {
    width: 10px;
    height: 10px;
}

/* sits above the bottom right corner of the window */
.voice {
    position: fixed;
    right: 39px;
    bottom: 1px;
    display: flex;
    height: 58px;
    border: 1px solid #bbb;
    border-radius: 12px;
    background: #f4f4f4;
    box-shadow: 0 2px 10px rgba(0, 0, 0, 0.35);
}

.voice-handle {
    display: flex;
    align-items: center;
    justify-content: center;
    width: 36px;
    border-right: 1px solid #ddd;
    border-radius: 12px 0 0 12px;
    background: #ececec;
}

.voice-handle::before {
    content: "";
    width: 5px;
    height: 26px;
    margin-right: 3px;
    border-radius: 3px;
    background: #888;
}

.voice button {
    width: 58px;
}

.voice svg {
    width: 18px;
    height: 28px;
}
```
